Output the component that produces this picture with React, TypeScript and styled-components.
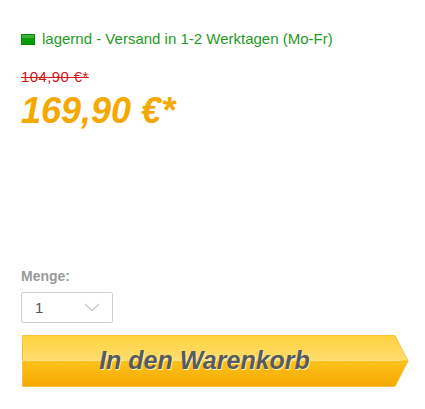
import React from "react";
import styled, { createGlobalStyle } from "styled-components";

const GlobalStyle = createGlobalStyle`
  html, body {
    margin: 0;
    padding: 0;
    background: #fff;
    font-family: "Liberation Sans", Arial, sans-serif;
  }
`;

const Panel = styled.div`
  width: 425px;
  height: 409px;
  box-sizing: border-box;
  padding: 30px 0 0 21px;
  display: flex;
  flex-direction: column;
`;

const Delivery = styled.div`
  display: flex;
  align-items: center;
  gap: 7px;
  color: #1f9a1f;
  font-size: 15px;
  line-height: 18px;
`;

const StockIcon = styled.span`
  width: 14px;
  height: 11px;
  box-sizing: border-box;
  border: 1px solid #008a00;
  background: linear-gradient(#3cb43c 0%, #3cb43c 35%, #0a9a0a 36%, #0a9a0a 100%);
`;

const OldPrice = styled.div`
  margin-top: 20px;
  color: #d41515;
  font-size: 15px;
  line-height: 17px;
  letter-spacing: 0.4px;
  text-decoration: line-through;
`;

const Price = styled.div`
  margin-top: 6px;
  color: #f5a900;
  font-size: 36px;
  line-height: 40px;
  font-weight: bold;
  font-style: italic;
`;

const QtyLabel = styled.div`
  margin-top: 137px;
  color: #9a9a9a;
  font-size: 14px;
  font-weight: bold;
  line-height: 17px;
`;

const QtySelect = styled.div`
  margin-top: 7px;
  width: 92px;
  height: 31px;
  box-sizing: border-box;
  border: 1px solid #cfcfcf;
  border-radius: 2px;
  display: flex;
  align-items: center;
  justify-content: space-between;
  padding: 0 12px 0 13px;
  color: #555;
  font-size: 15px;
`;

const CartButton = styled.button`
  position: relative;
  margin-top: 12px;
  margin-left: 1px;
  width: 387px;
  height: 52px;
  border: none;
  padding: 0;
  background: none;
  cursor: pointer;
  font-family: "Liberation Sans", Arial, sans-serif;
  svg {
    position: absolute;
    inset: 0;
  }
`;

const CartLabel = styled.span`
  position: relative;
  display: block;
  margin: -2px 0 0 -22px;
  color: #565a5e;
  font-size: 25px;
  font-weight: bold;
  font-style: italic;
  text-shadow: 1px 1px 0 #fff2b0;
`;

export default function App() {
  return (
    <Panel>
      <GlobalStyle />
      <Delivery>
        <StockIcon />
        lagernd - Versand in 1-2 Werktagen (Mo-Fr)
      </Delivery>
      <OldPrice>104,90 €*</OldPrice>
      <Price>169,90 €*</Price>
      <QtyLabel>Menge:</QtyLabel>
      <QtySelect>
        <span>1</span>
        <svg width="16" height="9" viewBox="0 0 16 9">
          <path d="M1 1 L8 7.5 L15 1" fill="none" stroke="#c8c8c8" strokeWidth="1.3" />
        </svg>
      </QtySelect>
      <CartButton>
        <svg width="387" height="52" viewBox="0 0 387 52">
          <defs>
            <linearGradient id="cartFill" x1="0" y1="0" x2="0" y2="1">
              <stop offset="0" stopColor="#ffd23c" />
              <stop offset="0.48" stopColor="#ffdd70" />
              <stop offset="0.5" stopColor="#fbc21c" />
              <stop offset="1" stopColor="#f6a800" />
            </linearGradient>
          </defs>
          <path
            d="M0.5 0.5 H373 L386 26 L373 51.5 H0.5 Z"
            fill="url(#cartFill)"
            stroke="#f9c13a"
            strokeWidth="1"
          />
          <line x1="1" y1="25.5" x2="380" y2="25.5" stroke="#ffe9a0" strokeWidth="1" strokeDasharray="2 1" />
        </svg>
        <CartLabel>In den Warenkorb</CartLabel>
      </CartButton>
    </Panel>
  );
}
